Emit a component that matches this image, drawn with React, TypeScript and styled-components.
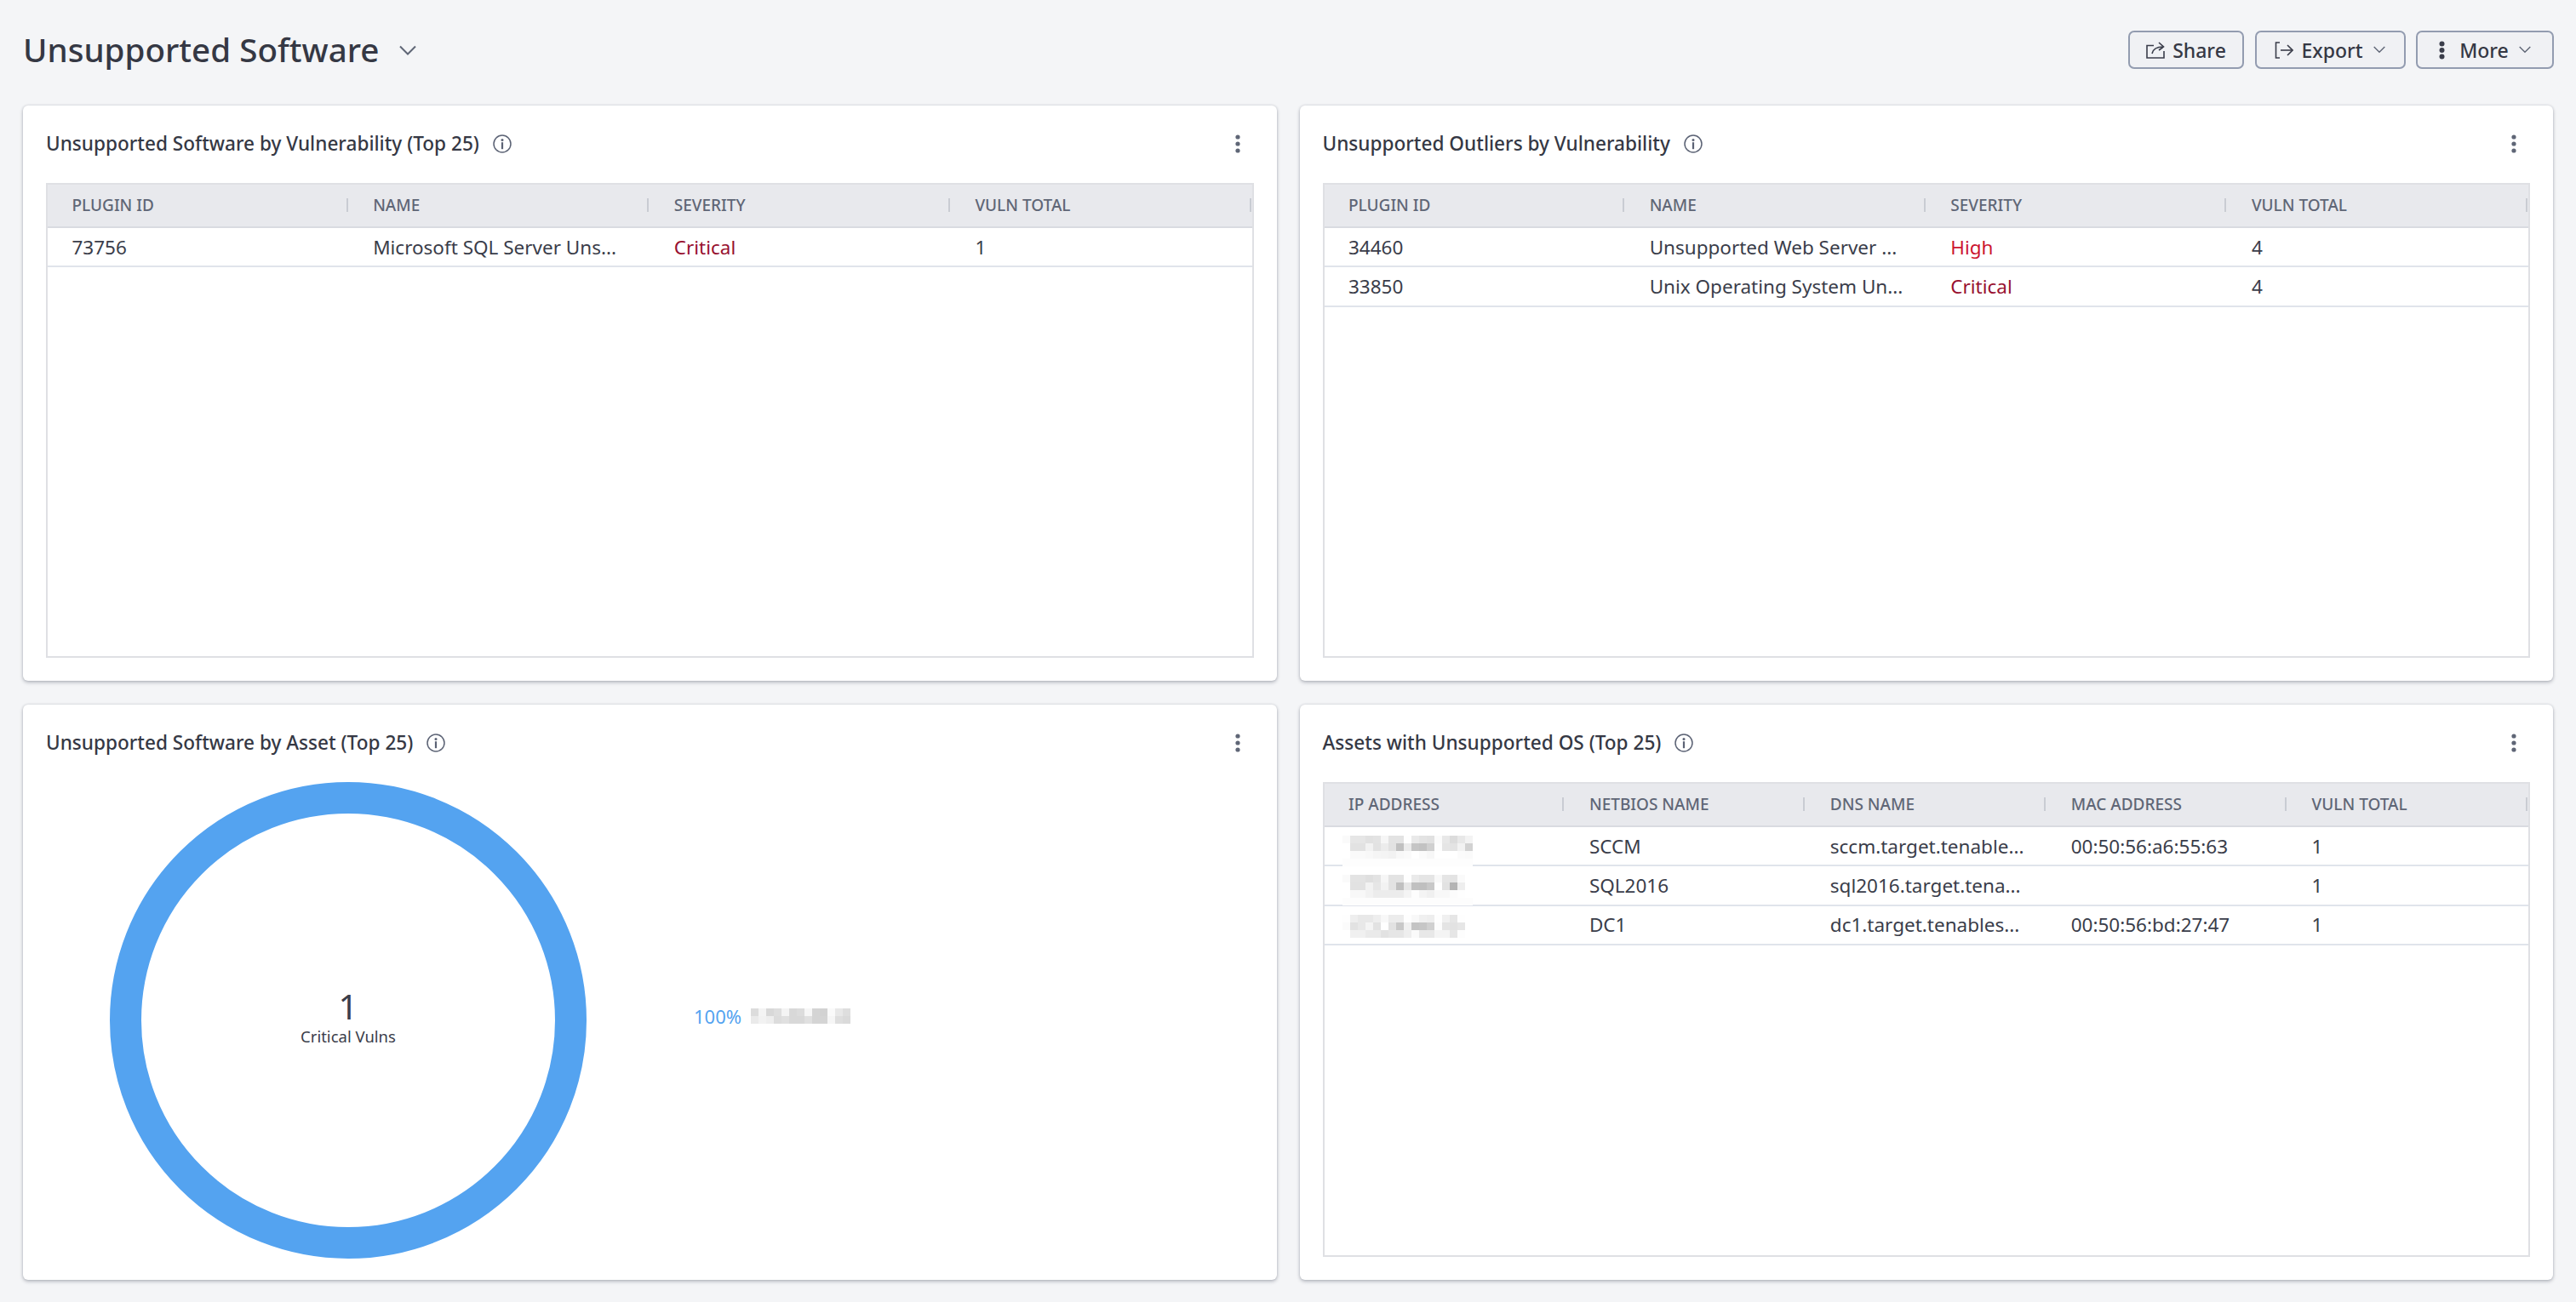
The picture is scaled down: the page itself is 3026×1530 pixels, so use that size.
import React from 'react';
import styled, { createGlobalStyle } from 'styled-components';

const GlobalStyle = createGlobalStyle`
  html, body {
    margin: 0;
    padding: 0;
    background: #f4f5f7;
  }
  body {
    font-family: "Noto Sans", "Open Sans", sans-serif;
    color: #3a3d4a;
  }
`;

const Page = styled.div`
  box-sizing: border-box;
  width: 3026px;
  height: 1530px;
  padding: 36px 26px 26px 27px;
  display: flex;
  flex-direction: column;
`;

const TopBar = styled.header`
  height: 45px;
  margin-bottom: 43px;
  display: flex;
  align-items: center;
  justify-content: space-between;
`;

const TitleGroup = styled.div`
  display: flex;
  align-items: center;
  gap: 24px;
`;

const PageTitle = styled.h1`
  margin: 0;
  font-size: 38.6px;
  line-height: 45px;
  font-weight: 500;
  color: #353844;
`;

const Actions = styled.div`
  display: flex;
  gap: 12.5px;
`;

const ActionButton = styled.button<{ $width: number }>`
  box-sizing: border-box;
  width: ${({ $width }) => $width}px;
  height: 45px;
  display: flex;
  align-items: center;
  justify-content: center;
  gap: 9px;
  padding: 0;
  background: #f0f1f4;
  border: 2px solid #939cb0;
  border-radius: 7px;
  font-family: inherit;
  font-size: 23px;
  font-weight: 500;
  color: #353844;
`;

const MoreLabel = styled.span`
  margin-left: 8px;
`;

const ButtonChevron = styled.span`
  display: flex;
  margin-left: 3px;
`;

const Grid = styled.main`
  flex: 1;
  display: grid;
  grid-template-columns: 1472.5px 1472.5px;
  grid-template-rows: 676px 676px;
  column-gap: 27px;
  row-gap: 28px;
`;

const Card = styled.section`
  box-sizing: border-box;
  display: flex;
  flex-direction: column;
  padding: 0 27px 27px;
  background: #fff;
  border-radius: 6px;
  box-shadow: 0 2px 4px rgba(60, 65, 85, 0.32), 0 0 3px rgba(60, 65, 85, 0.18);
`;

const CardHeader = styled.div`
  height: 91px;
  flex: none;
  display: flex;
  align-items: center;
  justify-content: space-between;
  padding-bottom: 2px;
  box-sizing: border-box;
`;

const CardTitleGroup = styled.div`
  display: flex;
  align-items: center;
  gap: 16px;
`;

const CardTitle = styled.h2`
  margin: 0;
  font-size: 22.6px;
  font-weight: 500;
  color: #353844;
`;

const KebabWrap = styled.div`
  display: flex;
  margin-right: 16px;
`;

const Table = styled.div`
  flex: 1;
  border: 2px solid #dfe0e4;
`;

const Row = styled.div<{ $cols: number }>`
  display: grid;
  grid-template-columns: repeat(${({ $cols }) => $cols}, 1fr);
`;

const HeadRow = styled(Row)`
  height: 51px;
  background: #e8e9ed;
  border-bottom: 2px solid #d9dbe1;
  box-sizing: border-box;
`;

const HeadCell = styled.div`
  position: relative;
  display: flex;
  align-items: center;
  padding: 0 0 1px 28.5px;
  font-size: 19px;
  font-weight: 500;
  color: #5f6676;

  &::after {
    content: '';
    position: absolute;
    right: 1px;
    top: 16px;
    width: 2px;
    height: 16px;
    background: #c9ccd3;
  }
`;

const BodyRow = styled(Row)`
  height: 46.4px;
  border-bottom: 2px solid #e0e4eb;
  box-sizing: border-box;
`;

const BodyCell = styled.div<{ $color?: string }>`
  position: relative;
  display: flex;
  align-items: center;
  padding-left: 28.5px;
  font-size: 22.5px;
  white-space: nowrap;
  color: ${({ $color }) => $color || '#3a3d4a'};
`;

const RedactionOverlay = styled.div`
  position: absolute;
  left: 21px;
  top: 10px;
  display: flex;
  z-index: 1;
`;

const ChartBody = styled.div`
  flex: 1;
  display: flex;
  align-items: flex-start;
  padding-left: 75px;
`;

const Donut = styled.div`
  position: relative;
  width: 560px;
  height: 560px;
  flex: none;
`;

const DonutCenter = styled.div`
  position: absolute;
  inset: 0;
  display: flex;
  flex-direction: column;
  align-items: center;
  justify-content: center;
  padding-bottom: 8px;
  box-sizing: border-box;
  color: #3a3d4a;
`;

const DonutValue = styled.div`
  font-size: 40px;
  line-height: 46px;
`;

const DonutLabel = styled.div`
  font-size: 18.5px;
  line-height: 24px;
`;

const Legend = styled.div`
  display: flex;
  align-items: center;
  gap: 11px;
  margin: 266px 0 0 126px;
`;

const LegendValue = styled.span`
  font-size: 22px;
  line-height: 18px;
  color: #54a3f0;
`;

const RedactionSvg = styled.svg`
  display: block;
`;

const Chevron = ({ size = 14 }: { size?: number }) => (
  <svg width={size} height={size * 0.6} viewBox="0 0 20 12" fill="none" stroke="#5f6676" strokeWidth="2">
    <path d="M1 1.5 L10 10.5 L19 1.5" />
  </svg>
);

const InfoIcon = () => (
  <svg width="22" height="22" viewBox="0 0 22 22" fill="none">
    <circle cx="11" cy="11" r="10" stroke="#5b6274" strokeWidth="1.5" />
    <circle cx="11" cy="6.4" r="1.5" fill="#5b6274" />
    <rect x="9.9" y="9.2" width="2.2" height="8" fill="#5b6274" />
  </svg>
);

const Kebab = () => (
  <svg width="6" height="22" viewBox="0 0 6 22" fill="#5f6676">
    <circle cx="3" cy="3" r="2.6" />
    <circle cx="3" cy="11" r="2.6" />
    <circle cx="3" cy="19" r="2.6" />
  </svg>
);

const ShareIcon = () => (
  <svg width="22" height="20" viewBox="0 0 22 20" fill="none" stroke="#3a3d4a" strokeWidth="1.6">
    <path d="M9 4.5 H1 V19 H21 V11" />
    <path d="M7 14 C8 9 11 6 20 6" />
    <path d="M15 1 L20.5 6 L15 10" />
  </svg>
);

const ExportIcon = () => (
  <svg width="22" height="20" viewBox="0 0 22 20" fill="none" stroke="#3a3d4a" strokeWidth="1.6">
    <path d="M6 1 H1.5 V19 H6" />
    <path d="M7 10 H21" />
    <path d="M15 4 L21 10 L15 16" />
  </svg>
);

const MoreIcon = () => (
  <svg width="7" height="22" viewBox="0 0 7 22" fill="#3a3d4a">
    <circle cx="3.5" cy="3.5" r="3" />
    <circle cx="3.5" cy="11" r="3" />
    <circle cx="3.5" cy="18.5" r="3" />
  </svg>
);

// each string is one row of blur cells, two hex digits = one grey level
const Redaction = ({ rows }: { rows: string[] }) => {
  const cols = rows[0].length / 2;
  return (
    <RedactionSvg width={cols * 9} height={rows.length * 9} shapeRendering="crispEdges">
      {rows.map((row, y) =>
        Array.from({ length: cols }, (_, x) => {
          const v = row.slice(x * 2, x * 2 + 2);
          return <rect key={`${x}-${y}`} x={x * 9} y={y * 9} width="9" height="9" fill={`#${v}${v}${v}`} />;
        }),
      )}
    </RedactionSvg>
  );
};

const ip1 = [
  'fae6e6e1e3f6e3e3fee9e3e1fbe8dce8f3',
  'ffe2e2f2e2ece2c0ebc5c2d0fde5e3f2d2',
  'fffafaf8f5f4f2f8fafffbf7fffffffbfa',
  'fdfdfdfdfdfdfdfdfdfdfdfdfdfdfdfdfd',
];
const ip2 = [
  'fae3e3dfe3f6e3e3feeae5e5f8e5e3faff',
  'ffe2e2f2e6f2e3c0e6c0bfc8fee2b4eeff',
  'fff8f8f2ececececf4fdf4f0f8f8fcfeff',
  'fdfdfdfdfdfdfdfdfdfdfdfdfdfdfdfdfd',
];
const ip3 = [
  'feeee8e8eef8ececfef8f0eefef0e6feff',
  'fbe2e8f4e2ffe2c8f0c4c6d0fce4e2e6ff',
  'fff0f0eaeae2e6e6eefae8e8f4f4e6fdff',
];
const legendBlur = [
  'dcf4d8def4d8dcf6d4d2fae8de',
  'eaf2eedce0d8d8e0d4d4f6deda',
];

const CRITICAL = '#98102f';
const HIGH = '#cc1530';

interface Cell {
  text?: string;
  color?: string;
  redaction?: string[];
}

const DataTable = ({ head, rows }: { head: string[]; rows: Cell[][] }) => (
  <Table>
    <HeadRow $cols={head.length}>
      {head.map((h) => (
        <HeadCell key={h}>{h}</HeadCell>
      ))}
    </HeadRow>
    {rows.map((row, i) => (
      <BodyRow key={i} $cols={head.length}>
        {row.map((c, j) => (
          <BodyCell key={j} $color={c.color}>
            {c.redaction ? (
              <RedactionOverlay>
                <Redaction rows={c.redaction} />
              </RedactionOverlay>
            ) : (
              c.text
            )}
          </BodyCell>
        ))}
      </BodyRow>
    ))}
  </Table>
);

const Panel = ({ title, children }: { title: string; children: React.ReactNode }) => (
  <Card>
    <CardHeader>
      <CardTitleGroup>
        <CardTitle>{title}</CardTitle>
        <InfoIcon />
      </CardTitleGroup>
      <KebabWrap>
        <Kebab />
      </KebabWrap>
    </CardHeader>
    {children}
  </Card>
);

const pluginHead = ['PLUGIN ID', 'NAME', 'SEVERITY', 'VULN TOTAL'];

export default function App() {
  return (
    <Page>
      <GlobalStyle />
      <TopBar>
        <TitleGroup>
          <PageTitle>Unsupported Software</PageTitle>
          <Chevron size={20} />
        </TitleGroup>
        <Actions>
          <ActionButton $width={136}>
            <ShareIcon />
            Share
          </ActionButton>
          <ActionButton $width={177}>
            <ExportIcon />
            Export
            <ButtonChevron>
              <Chevron />
            </ButtonChevron>
          </ActionButton>
          <ActionButton $width={162}>
            <MoreIcon />
            <MoreLabel>More</MoreLabel>
            <ButtonChevron>
              <Chevron />
            </ButtonChevron>
          </ActionButton>
        </Actions>
      </TopBar>
      <Grid>
        <Panel title="Unsupported Software by Vulnerability (Top 25)">
          <DataTable
            head={pluginHead}
            rows={[
              [
                { text: '73756' },
                { text: 'Microsoft SQL Server Uns...' },
                { text: 'Critical', color: CRITICAL },
                { text: '1' },
              ],
            ]}
          />
        </Panel>
        <Panel title="Unsupported Outliers by Vulnerability">
          <DataTable
            head={pluginHead}
            rows={[
              [
                { text: '34460' },
                { text: 'Unsupported Web Server ...' },
                { text: 'High', color: HIGH },
                { text: '4' },
              ],
              [
                { text: '33850' },
                { text: 'Unix Operating System Un...' },
                { text: 'Critical', color: CRITICAL },
                { text: '4' },
              ],
            ]}
          />
        </Panel>
        <Panel title="Unsupported Software by Asset (Top 25)">
          <ChartBody>
            <Donut>
              <svg width="560" height="560" viewBox="0 0 560 560">
                <circle cx="280" cy="280" r="261.5" fill="none" stroke="#54a3f0" strokeWidth="37" />
              </svg>
              <DonutCenter>
                <DonutValue>1</DonutValue>
                <DonutLabel>Critical Vulns</DonutLabel>
              </DonutCenter>
            </Donut>
            <Legend>
              <LegendValue>100%</LegendValue>
              <Redaction rows={legendBlur} />
            </Legend>
          </ChartBody>
        </Panel>
        <Panel title="Assets with Unsupported OS (Top 25)">
          <DataTable
            head={['IP ADDRESS', 'NETBIOS NAME', 'DNS NAME', 'MAC ADDRESS', 'VULN TOTAL']}
            rows={[
              [
                { redaction: ip1 },
                { text: 'SCCM' },
                { text: 'sccm.target.tenable...' },
                { text: '00:50:56:a6:55:63' },
                { text: '1' },
              ],
              [
                { redaction: ip2 },
                { text: 'SQL2016' },
                { text: 'sql2016.target.tena...' },
                { text: '' },
                { text: '1' },
              ],
              [
                { redaction: ip3 },
                { text: 'DC1' },
                { text: 'dc1.target.tenables...' },
                { text: '00:50:56:bd:27:47' },
                { text: '1' },
              ],
            ]}
          />
        </Panel>
      </Grid>
    </Page>
  );
}
